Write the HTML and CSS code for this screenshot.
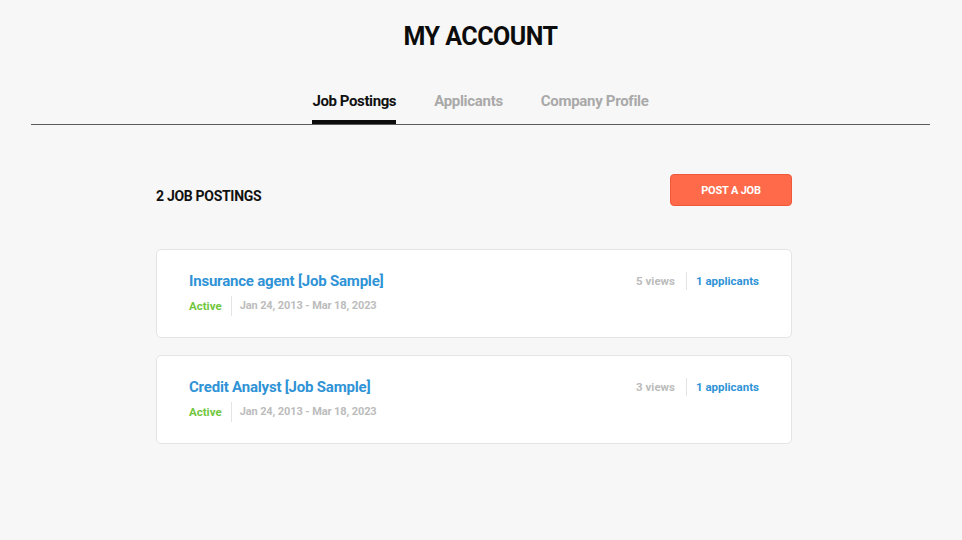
FILE: index.html
```html
<!DOCTYPE html>
<html>
<head>
<meta charset="utf-8">
<link rel="stylesheet" href="styles.css">
</head>
<body>
<header class="page-head">
  <h1 class="title">MY ACCOUNT</h1>
  <nav class="tabs">
    <a class="tab active">Job Postings</a>
    <a class="tab">Applicants</a>
    <a class="tab">Company Profile</a>
  </nav>
</header>
<main class="content">
  <div class="toolbar">
    <h2 class="count">2 JOB POSTINGS</h2>
    <button class="post-btn">POST A JOB</button>
  </div>
  <div class="card">
    <div class="card-left">
      <a class="job-title">Insurance agent [Job Sample]</a>
      <div class="meta">
        <span class="status">Active</span>
        <span class="dates">Jan 24, 2013 - Mar 18, 2023</span>
      </div>
    </div>
    <div class="card-right">
      <span class="views">5 views</span>
      <a class="applicants">1 applicants</a>
    </div>
  </div>
  <div class="card">
    <div class="card-left">
      <a class="job-title">Credit Analyst [Job Sample]</a>
      <div class="meta">
        <span class="status">Active</span>
        <span class="dates">Jan 24, 2013 - Mar 18, 2023</span>
      </div>
    </div>
    <div class="card-right">
      <span class="views">3 views</span>
      <a class="applicants">1 applicants</a>
    </div>
  </div>
</main>
</body>
</html>
```
FILE: styles.css
```css
* { box-sizing: border-box; }
body {
  margin: 0;
  background: #f7f7f7;
  font-family: Roboto, "Open Sans", sans-serif;
  color: #111;
}
.page-head {
  padding-top: 22px;
  margin: 0 32px 0 31px;
  border-bottom: 1px solid #5a5a5a;
}
.title {
  margin: 0;
  text-align: center;
  font-size: 25px;
  font-weight: 700;
  line-height: 30px;
  letter-spacing: -0.5px;
  color: #0c0c0c;
}
.tabs {
  display: flex;
  justify-content: center;
  gap: 38px;
  margin-top: 39px;
}
.tab {
  font-size: 15px;
  font-weight: 700;
  color: #a9a9a9;
  line-height: 20px;
  padding-bottom: 9px;
  border-bottom: 4px solid transparent;
  letter-spacing: -0.3px;
}
.tab.active {
  color: #111;
  border-bottom-color: #0c0c0c;
  letter-spacing: -0.4px;
}
.content {
  width: 636px;
  margin: 49px 0 0 156px;
}
.toolbar {
  display: flex;
  justify-content: space-between;
  align-items: center;
  margin-bottom: 43px;
}
.count {
  margin: 0;
  padding-top: 11px;
  font-size: 14px;
  font-weight: 700;
  letter-spacing: -0.3px;
  color: #111;
}
.post-btn {
  width: 122px;
  height: 32px;
  border: 1px solid #f0583a;
  border-radius: 4px;
  background: #ff6a4a;
  color: #fff;
  font-family: inherit;
  font-size: 11px;
  font-weight: 700;
  letter-spacing: -0.2px;
}
.card {
  display: flex;
  justify-content: space-between;
  align-items: flex-start;
  height: 89px;
  margin-bottom: 17px;
  padding: 21px 32px 0 32px;
  background: #fff;
  border: 1px solid #e4e4e4;
  border-radius: 5px;
}
.job-title {
  display: block;
  font-size: 15px;
  font-weight: 700;
  line-height: 20px;
  letter-spacing: -0.2px;
  color: #2f93d6;
}
.meta {
  display: flex;
  align-items: center;
  margin-top: 5px;
  font-size: 11px;
  font-weight: 700;
  line-height: 20px;
}
.status {
  color: #70c63c;
  font-size: 11.5px;
  padding-right: 9px;
  border-right: 1px solid #e4e4e4;
}
.dates {
  color: #bcbcbc;
  padding-left: 8px;
  letter-spacing: -0.1px;
}
.card-right {
  display: flex;
  align-items: center;
  margin-top: 1px;
  font-size: 11.5px;
  font-weight: 700;
  line-height: 18px;
}
.views {
  color: #bcbcbc;
  padding-right: 11px;
  border-right: 1px solid #e4e4e4;
}
.applicants {
  color: #2f93d6;
  padding-left: 9px;
}
```
